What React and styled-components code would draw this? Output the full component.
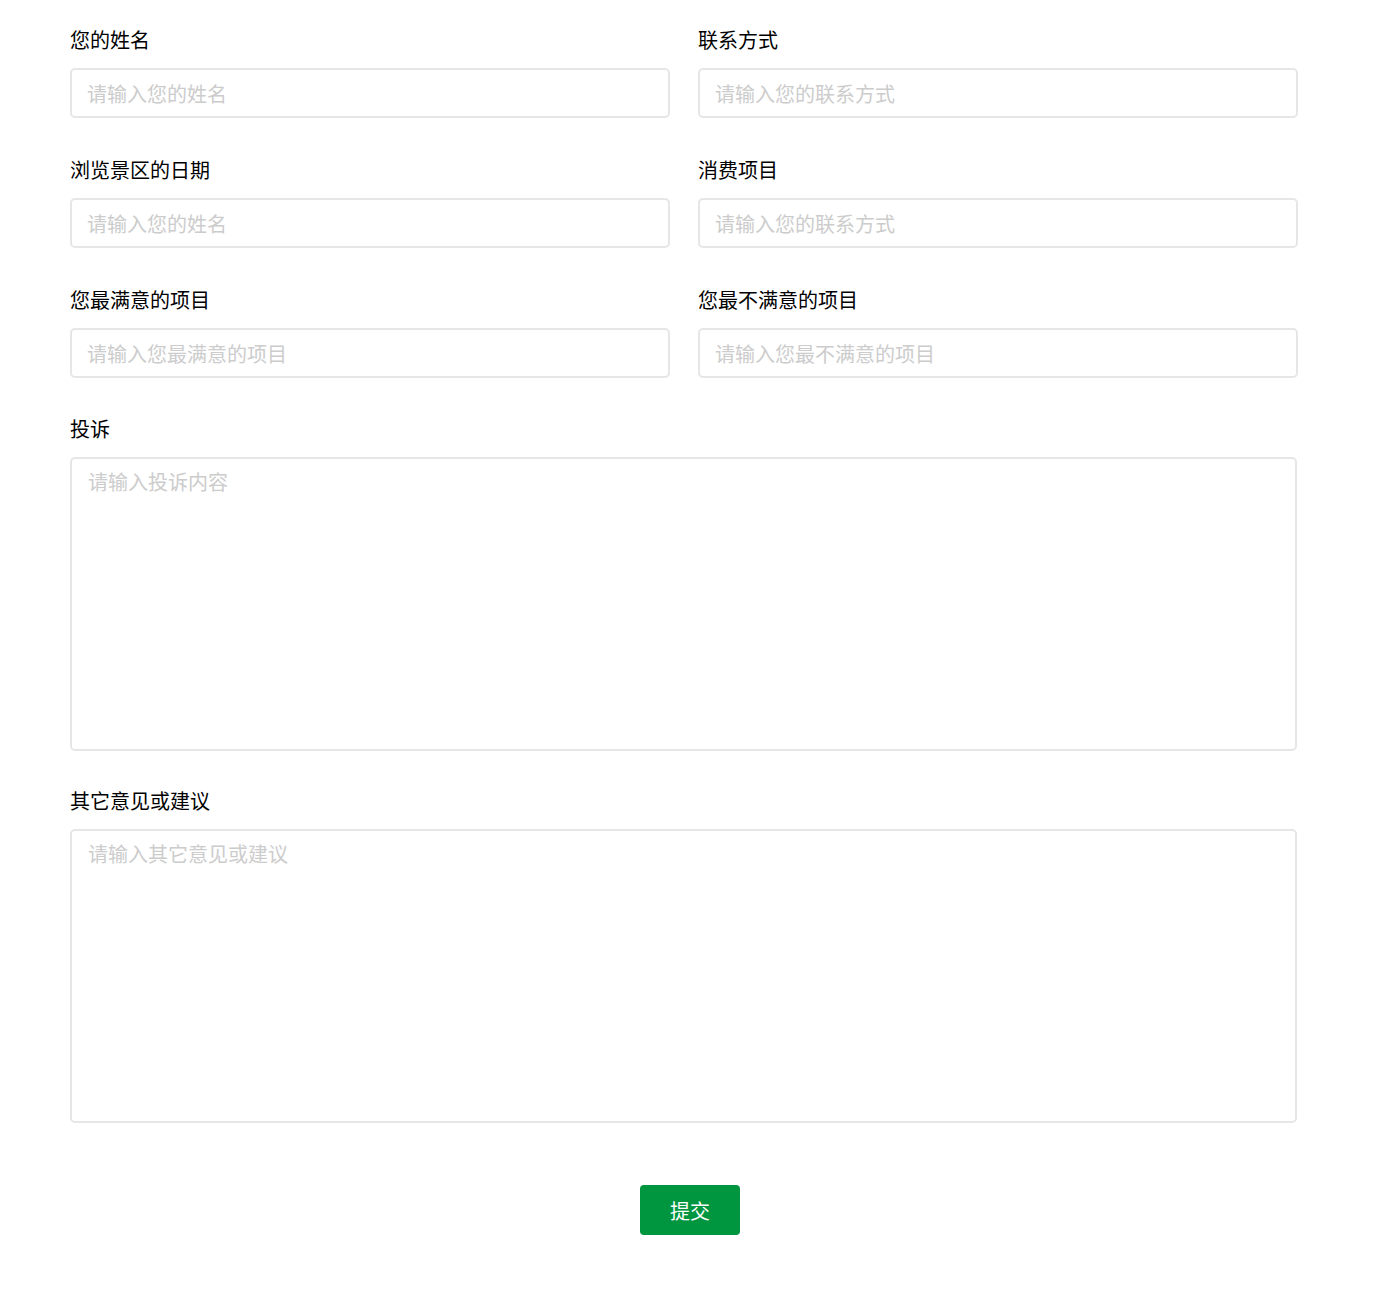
import styled, { createGlobalStyle } from "styled-components";

const GlobalStyle = createGlobalStyle`
  body {
    margin: 0;
    background: #fff;
    font-family: "Noto Sans CJK SC", "Noto Sans", sans-serif;
  }
`;

const Form = styled.form`
  width: 1240px;
  margin-left: 70px;
  padding-top: 26px;
  padding-bottom: 63px;
`;
const Grid = styled.div`
  display: grid;
  grid-template-columns: 600px 600px;
  column-gap: 28px;
  row-gap: 38px;
`;
const Field = styled.div`
  display: flex;
  flex-direction: column;
  margin-top: ${(p) => p.$top || 0}px;
  width: ${(p) => (p.$wide ? "1227px" : "auto")};
`;
const Label = styled.label`
  font-size: 20px;
  line-height: 28px;
  color: #000;
  margin-bottom: 14px;
`;
const Input = styled.input`
  box-sizing: border-box;
  height: 50px;
  border: 2px solid #e6e6e6;
  border-radius: 5px;
  padding: 0 15px;
  font-size: 20px;
  font-family: inherit;
  color: #333;
  outline: none;
  &::placeholder {
    color: #cccccc;
  }
`;
const TextArea = styled.textarea`
  box-sizing: border-box;
  height: 294px;
  border: 2px solid #e6e6e6;
  border-radius: 5px;
  padding: 9px 16px;
  font-size: 20px;
  line-height: 28px;
  font-family: inherit;
  color: #333;
  resize: none;
  outline: none;
  &::placeholder {
    color: #cccccc;
  }
`;
const ButtonRow = styled.div`
  display: flex;
  justify-content: center;
  margin-top: 62px;
`;
const Button = styled.button`
  width: 100px;
  height: 50px;
  background: #00953f;
  color: #fff;
  border: none;
  border-radius: 4px;
  font-size: 20px;
  font-family: inherit;
  cursor: pointer;
`;

const fields = [
  ["您的姓名", "请输入您的姓名"],
  ["联系方式", "请输入您的联系方式"],
  ["浏览景区的日期", "请输入您的姓名"],
  ["消费项目", "请输入您的联系方式"],
  ["您最满意的项目", "请输入您最满意的项目"],
  ["您最不满意的项目", "请输入您最不满意的项目"],
];

const App = () => {
  return (
    <Form onSubmit={(e) => e.preventDefault()}>
      <GlobalStyle />
      <Grid>
        {fields.map(([label, ph], i) => (
          <Field key={i}>
            <Label>{label}</Label>
            <Input type="text" placeholder={ph} />
          </Field>
        ))}
      </Grid>
      <Field $wide $top={37}>
        <Label>投诉</Label>
        <TextArea placeholder="请输入投诉内容" />
      </Field>
      <Field $wide $top={36}>
        <Label>其它意见或建议</Label>
        <TextArea placeholder="请输入其它意见或建议" />
      </Field>
      <ButtonRow>
        <Button type="submit">提交</Button>
      </ButtonRow>
    </Form>
  );
};

export default App;
